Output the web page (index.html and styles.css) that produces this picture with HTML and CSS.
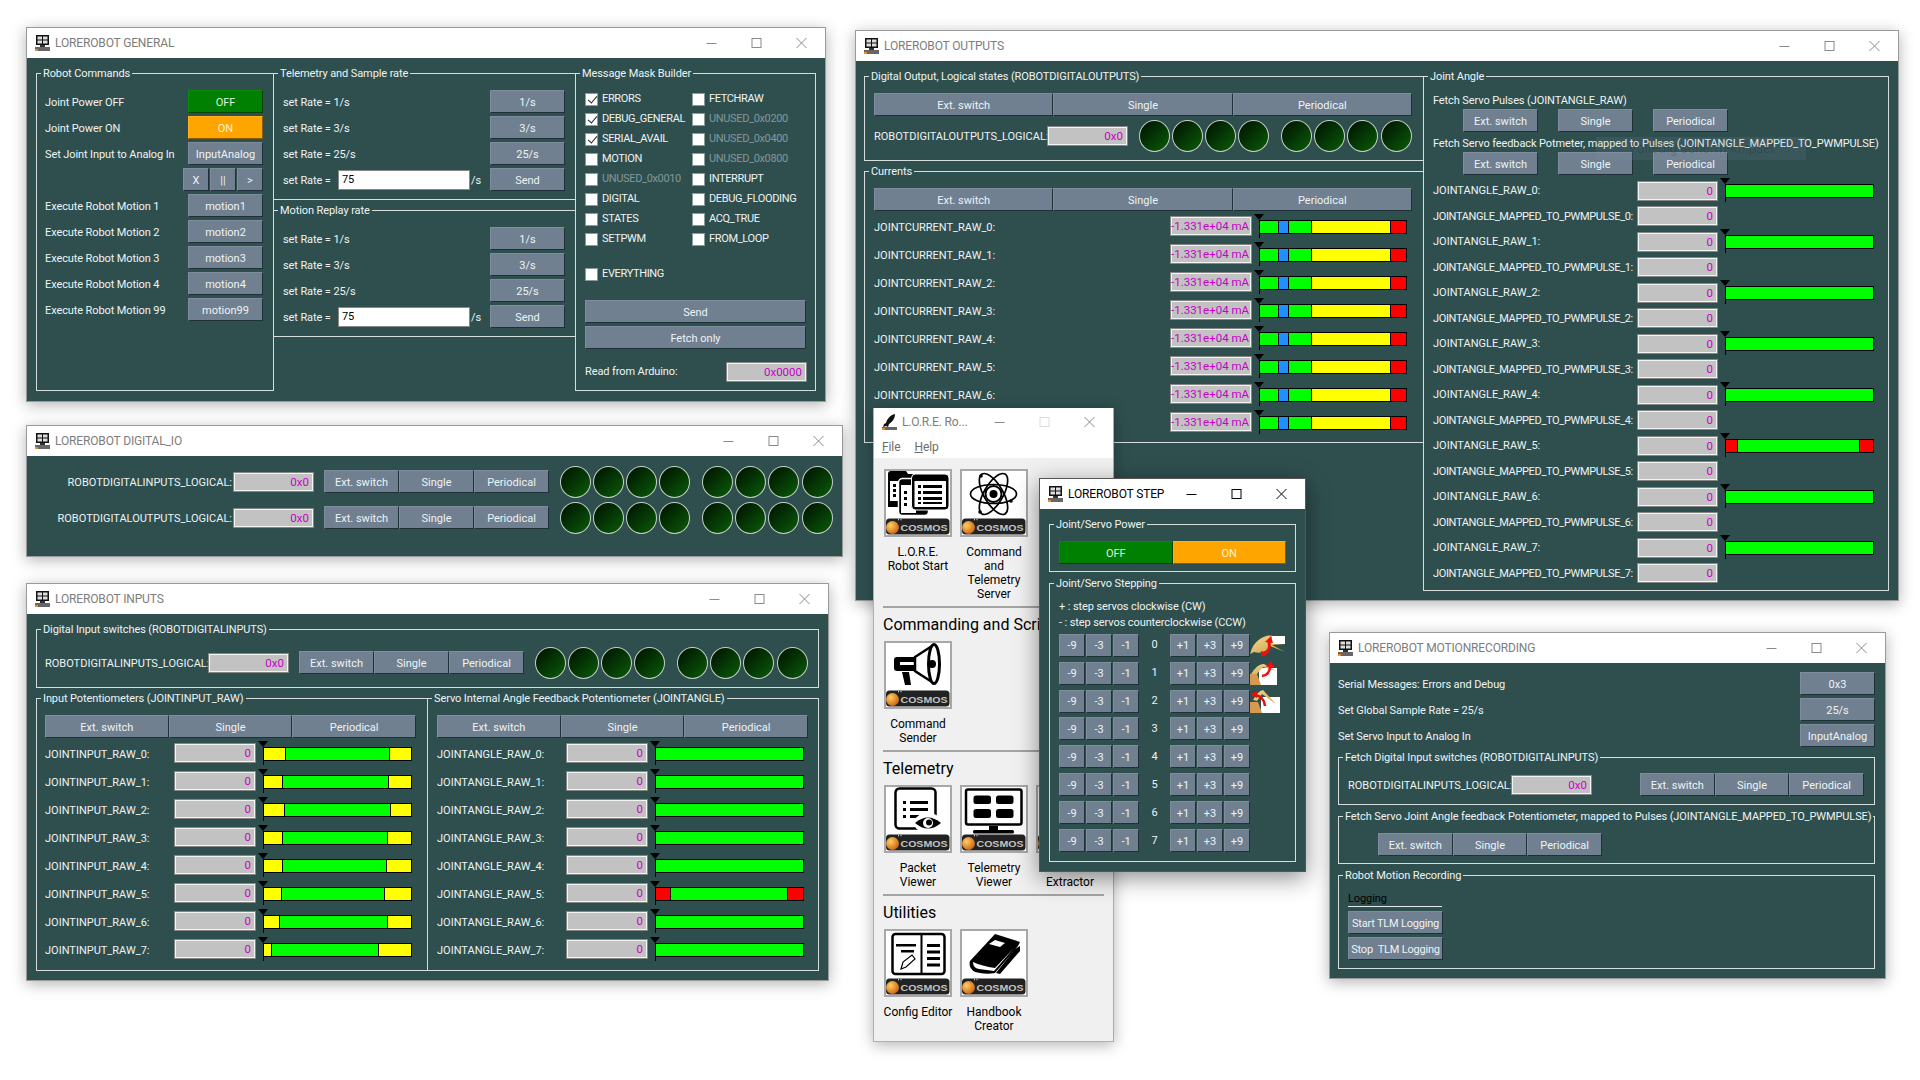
FILE: index.html
```html
<!DOCTYPE html>
<html lang="en">
<head>
<meta charset="utf-8">
<title>LORE Robot COSMOS</title>
<link rel="stylesheet" href="styles.css">
</head>
<body>
<svg class="defs" xmlns="http://www.w3.org/2000/svg">
  <defs>
    <radialGradient id="orb" cx="35%" cy="35%" r="75%"><stop offset="0" stop-color="#ffd060"/><stop offset="1" stop-color="#c85a10"/></radialGradient>
    <linearGradient id="bone" x1="0" y1="0" x2="1" y2="1"><stop offset="0" stop-color="#f3dc98"/><stop offset="1" stop-color="#c89a3c"/></linearGradient>
    <g id="winico">
      <rect x="2" y="0" width="13" height="10" fill="#111"/>
      <rect x="3.500" y="1.500" width="4.500" height="3" fill="#ddd"/><rect x="9" y="1.500" width="4.500" height="3" fill="#ddd"/>
      <rect x="3.500" y="5.500" width="4.500" height="3" fill="#ddd"/><rect x="9" y="5.500" width="4.500" height="3" fill="#ddd"/>
      <rect x="6" y="10" width="5" height="2" fill="#333"/>
      <rect x="1" y="12" width="15" height="4" fill="#666"/>
      <rect x="1" y="14" width="3" height="2" fill="#f08c1e"/>
    </g>
    <g id="rocketico">
      <path d="M14 0 C9 1 6 5 5 9 L3 10 L2 13 L5 12 L7 13 L8 10 C11 8 14 5 14 0Z" fill="#111"/>
      <rect x="1" y="13" width="15" height="3" fill="#666"/>
      <rect x="1" y="14" width="3" height="2" fill="#f08c1e"/>
    </g>
    <g id="badge">
      <rect x="0" y="47.500" width="63.500" height="16" rx="3.500" fill="#222"/>
      <circle cx="6.500" cy="56.500" r="6.500" fill="url(#orb)"/>
      <text x="14.500" y="59.800" class="cosmos" textLength="47" lengthAdjust="spacingAndGlyphs">COSMOS</text>
      <rect x="12" y="47.800" width="1" height="1.500" fill="#ccc"/><rect x="14.500" y="47.800" width="1" height="1.500" fill="#ccc"/>
    </g>
    <g id="i-start">
      <path d="M2 3 a3 3 0 0 1 3-3 h15 l2 3 h26 a3 3 0 0 1 3 3 v30 h-49z" fill="#000"/>
      <rect x="4" y="10" width="10" height="20" fill="#fff"/>
      <rect x="7" y="13" width="3" height="3" fill="#000"/><rect x="7" y="18" width="3" height="3" fill="#000"/><rect x="7" y="23" width="3" height="3" fill="#000"/>
      <rect x="12.500" y="7.500" width="30" height="37" rx="4" fill="#000" stroke="#fff" stroke-width="1.500"/>
      <rect x="15" y="14" width="15" height="28" fill="#fff"/>
      <rect x="18" y="20" width="3" height="3" fill="#000"/><rect x="18" y="26" width="3" height="3" fill="#000"/><rect x="18" y="32" width="3" height="3" fill="#000"/>
      <rect x="25.500" y="3" width="37.500" height="36" rx="4" fill="#000" stroke="#fff" stroke-width="1"/>
      <rect x="28.500" y="10" width="31.500" height="26" fill="#fff"/>
      <rect x="32" y="14" width="3" height="3"/><rect x="37" y="14" width="19" height="3"/>
      <rect x="32" y="20" width="3" height="3"/><rect x="37" y="20" width="19" height="3"/>
      <rect x="32" y="26" width="3" height="3"/><rect x="37" y="26" width="19" height="3"/>
      <rect x="32" y="31" width="3" height="2"/><rect x="37" y="31" width="19" height="2"/>
    </g>
    <g id="i-atom" fill="none" stroke="#000" stroke-width="1.700">
      <ellipse cx="31.500" cy="23" rx="23" ry="9.500"/>
      <ellipse cx="31.500" cy="23" rx="23" ry="9.500" transform="rotate(60 31.500 23)"/>
      <ellipse cx="31.500" cy="23" rx="23" ry="9.500" transform="rotate(-60 31.500 23)"/>
      <circle cx="31.500" cy="23" r="8" fill="#fff" stroke-width="2"/>
      <circle cx="31.500" cy="23" r="4" fill="#000" stroke="none"/>
      <circle cx="19" cy="5" r="1.800" fill="#000" stroke="none"/>
      <circle cx="18" cy="41" r="1.800" fill="#000" stroke="none"/>
      <circle cx="49" cy="30" r="1.800" fill="#000" stroke="none"/>
    </g>
    <g id="i-mega">
      <path d="M8 17 a3 3 0 0 1 3-3 h18 v14 h-18 a3 3 0 0 1-3-3z" fill="#000"/>
      <path d="M14 19 h14 v3 h-14z" fill="#fff"/>
      <path d="M16 29 h7 l2 13 h-6z" fill="#000"/>
      <path d="M29 14 L46 3 v36 L29 28z" fill="#fff" stroke="#000" stroke-width="2.500"/>
      <ellipse cx="48" cy="21" rx="5.500" ry="19.500" fill="#fff" stroke="#000" stroke-width="3"/>
      <circle cx="46" cy="21" r="4" fill="#000"/>
    </g>
    <g id="i-packet">
      <rect x="9.500" y="1.500" width="40" height="40" rx="4" fill="#fff" stroke="#000" stroke-width="2.500"/>
      <rect x="17" y="14" width="3" height="3"/><rect x="24" y="14" width="18" height="3"/>
      <rect x="17" y="21" width="3" height="3"/><rect x="24" y="21" width="18" height="3"/>
      <rect x="17" y="28" width="3" height="3"/><rect x="24" y="28" width="9" height="3"/>
      <ellipse cx="42" cy="36" rx="14" ry="10" fill="#fff"/>
      <path d="M29 36 Q42 25 55 36 Q42 47 29 36Z" fill="#000"/>
      <circle cx="42" cy="36" r="5" fill="#fff"/><circle cx="43" cy="35.500" r="3" fill="#000"/>
    </g>
    <g id="i-tlm">
      <rect x="4" y="2.500" width="55.500" height="35" rx="2" fill="#fff" stroke="#000" stroke-width="2.500"/>
      <rect x="11.500" y="8.500" width="17.500" height="8.500" rx="2.500"/><rect x="34" y="8.500" width="17.500" height="8.500" rx="2.500"/>
      <rect x="11.500" y="22" width="17.500" height="9" rx="2.500"/><rect x="34" y="22" width="17.500" height="9" rx="2.500"/>
      <rect x="27" y="39" width="9" height="4"/><rect x="11" y="43" width="41" height="3.500" rx="1.500"/>
    </g>
    <g id="i-config">
      <rect x="6.500" y="3" width="52" height="40" rx="3" fill="#fff" stroke="#000" stroke-width="2.500"/>
      <rect x="34.500" y="3" width="2" height="40"/>
      <rect x="10" y="13" width="20" height="2.500"/><rect x="15" y="19" width="13" height="2.500"/>
      <rect x="41" y="13" width="13" height="3"/><rect x="41" y="19.500" width="13" height="3"/><rect x="41" y="26" width="13" height="3"/><rect x="41" y="32.500" width="13" height="3"/>
      <path d="M15 38 L17 31 L26 24 L29 28 L20 36Z" fill="#fff" stroke="#000" stroke-width="1.200"/>
    </g>
    <g id="i-book">
      <path d="M8 30 L33 3 L58 11 L56 15 L33 42 Q24 44 13 41 Q6 37 8 30Z" fill="#000"/>
      <path d="M11 31 Q11 37 17 38 L32 40 L52 17 L33 37 Q20 35 11 31Z" fill="#fff"/>
      <path d="M27 13 L33 9 L43 12 L38 16Z" fill="#fff"/>
      <path d="M53 18 L58 15 V20 L38 43 L34 42Z" fill="#000"/>
    </g>
  </defs>
</svg>

<main class="desk">

  <section class="win w-general">
    <header class="title"><svg class="ti" viewBox="0 0 16 16"><use href="#winico"/></svg><span class="tt">LOREROBOT GENERAL</span><div class="ctrls"><svg viewBox="0 0 10 10"><path d="M0 5.500H10"/></svg><svg viewBox="0 0 10 10"><rect x=".5" y=".5" width="9" height="9"/></svg><svg viewBox="0 0 10 10"><path d="M0 0L10 10M10 0L0 10"/></svg></div></header>
    <div class="body gen-body">
      <div class="grp gen-c1">
        <span class="lg">Robot Commands</span>
        <div class="r"><span>Joint Power OFF</span><button class="b wb green">OFF</button></div>
        <div class="r"><span>Joint Power ON</span><button class="b wb orange">ON</button></div>
        <div class="r"><span>Set Joint Input to Analog In</span><button class="b wb">InputAnalog</button></div>
        <div class="r r-end"><button class="b tiny">X</button><button class="b tiny">||</button><button class="b tiny">&gt;</button></div>
        <div class="r"><span>Execute Robot Motion 1</span><button class="b wb">motion1</button></div>
        <div class="r"><span>Execute Robot Motion 2</span><button class="b wb">motion2</button></div>
        <div class="r"><span>Execute Robot Motion 3</span><button class="b wb">motion3</button></div>
        <div class="r"><span>Execute Robot Motion 4</span><button class="b wb">motion4</button></div>
        <div class="r"><span>Execute Robot Motion 99</span><button class="b wb">motion99</button></div>
      </div>
      <div class="gen-c2">
        <div class="grp rate">
          <span class="lg">Telemetry and Sample rate</span>
          <div class="r"><span>set Rate = 1/s</span><button class="b wb">1/s</button></div>
          <div class="r"><span>set Rate = 3/s</span><button class="b wb">3/s</button></div>
          <div class="r"><span>set Rate = 25/s</span><button class="b wb">25/s</button></div>
          <div class="r"><span class="rl">set Rate =</span><span class="inp">75</span><span class="rs">/s</span><button class="b wb">Send</button></div>
        </div>
        <div class="grp rate">
          <span class="lg">Motion Replay rate</span>
          <div class="r"><span>set Rate = 1/s</span><button class="b wb">1/s</button></div>
          <div class="r"><span>set Rate = 3/s</span><button class="b wb">3/s</button></div>
          <div class="r"><span>set Rate = 25/s</span><button class="b wb">25/s</button></div>
          <div class="r"><span class="rl">set Rate =</span><span class="inp">75</span><span class="rs">/s</span><button class="b wb">Send</button></div>
        </div>
      </div>
      <div class="grp gen-c3">
        <span class="lg">Message Mask Builder</span>
        <div class="mask">
          <label class="ck"><i class="cb on"></i>ERRORS</label><label class="ck"><i class="cb"></i>FETCHRAW</label>
          <label class="ck"><i class="cb on"></i>DEBUG_GENERAL</label><label class="ck off"><i class="cb"></i>UNUSED_0x0200</label>
          <label class="ck"><i class="cb on"></i>SERIAL_AVAIL</label><label class="ck off"><i class="cb"></i>UNUSED_0x0400</label>
          <label class="ck"><i class="cb"></i>MOTION</label><label class="ck off"><i class="cb"></i>UNUSED_0x0800</label>
          <label class="ck off"><i class="cb"></i>UNUSED_0x0010</label><label class="ck"><i class="cb"></i>INTERRUPT</label>
          <label class="ck"><i class="cb"></i>DIGITAL</label><label class="ck"><i class="cb"></i>DEBUG_FLOODING</label>
          <label class="ck"><i class="cb"></i>STATES</label><label class="ck"><i class="cb"></i>ACQ_TRUE</label>
          <label class="ck"><i class="cb"></i>SETPWM</label><label class="ck"><i class="cb"></i>FROM_LOOP</label>
        </div>
        <label class="ck every"><i class="cb"></i>EVERYTHING</label>
        <button class="b fw">Send</button>
        <button class="b fw">Fetch only</button>
        <div class="read"><span>Read from Arduino:</span><span class="v">0x0000</span></div>
      </div>
    </div>
  </section>

  <section class="win w-dio">
    <header class="title"><svg class="ti" viewBox="0 0 16 16"><use href="#winico"/></svg><span class="tt">LOREROBOT DIGITAL_IO</span><div class="ctrls"><svg viewBox="0 0 10 10"><path d="M0 5.500H10"/></svg><svg viewBox="0 0 10 10"><rect x=".5" y=".5" width="9" height="9"/></svg><svg viewBox="0 0 10 10"><path d="M0 0L10 10M10 0L0 10"/></svg></div></header>
    <div class="body dio-body">
      <div class="io"><span class="iol">ROBOTDIGITALINPUTS_LOGICAL:</span><span class="v">0x0</span><div class="seg"><button class="b">Ext. switch</button><button class="b">Single</button><button class="b">Periodical</button></div><div class="leds"><div><i></i><i></i><i></i><i></i></div><div><i></i><i></i><i></i><i></i></div></div></div>
      <div class="io"><span class="iol">ROBOTDIGITALOUTPUTS_LOGICAL:</span><span class="v">0x0</span><div class="seg"><button class="b">Ext. switch</button><button class="b">Single</button><button class="b">Periodical</button></div><div class="leds"><div><i></i><i></i><i></i><i></i></div><div><i></i><i></i><i></i><i></i></div></div></div>
    </div>
  </section>

  <section class="win w-inputs">
    <header class="title"><svg class="ti" viewBox="0 0 16 16"><use href="#winico"/></svg><span class="tt">LOREROBOT INPUTS</span><div class="ctrls"><svg viewBox="0 0 10 10"><path d="M0 5.500H10"/></svg><svg viewBox="0 0 10 10"><rect x=".5" y=".5" width="9" height="9"/></svg><svg viewBox="0 0 10 10"><path d="M0 0L10 10M10 0L0 10"/></svg></div></header>
    <div class="body in-body">
      <div class="grp in-dig">
        <span class="lg">Digital Input switches (ROBOTDIGITALINPUTS)</span>
        <div class="io"><span class="iol">ROBOTDIGITALINPUTS_LOGICAL:</span><span class="v">0x0</span><div class="seg"><button class="b">Ext. switch</button><button class="b">Single</button><button class="b">Periodical</button></div><div class="leds"><div><i></i><i></i><i></i><i></i></div><div><i></i><i></i><i></i><i></i></div></div></div>
      </div>
      <div class="in-pots">
        <div class="grp pot">
          <span class="lg">Input Potentiometers (JOINTINPUT_RAW)</span>
          <div class="seg seg3"><button class="b">Ext. switch</button><button class="b">Single</button><button class="b">Periodical</button></div>
          <div class="m"><span>JOINTINPUT_RAW_0:</span><span class="v">0</span><div class="bar"><i class="y" style="width:15.1%"></i><i class="g" style="width:70.5%"></i><i class="y fl"></i></div></div>
          <div class="m"><span>JOINTINPUT_RAW_1:</span><span class="v">0</span><div class="bar"><i class="y" style="width:12.9%"></i><i class="g" style="width:72%"></i><i class="y fl"></i></div></div>
          <div class="m"><span>JOINTINPUT_RAW_2:</span><span class="v">0</span><div class="bar"><i class="y" style="width:14.4%"></i><i class="g" style="width:72.3%"></i><i class="y fl"></i></div></div>
          <div class="m"><span>JOINTINPUT_RAW_3:</span><span class="v">0</span><div class="bar"><i class="y" style="width:12.9%"></i><i class="g" style="width:71.3%"></i><i class="y fl"></i></div></div>
          <div class="m"><span>JOINTINPUT_RAW_4:</span><span class="v">0</span><div class="bar"><i class="y" style="width:12.9%"></i><i class="g" style="width:70.6%"></i><i class="y fl"></i></div></div>
          <div class="m"><span>JOINTINPUT_RAW_5:</span><span class="v">0</span><div class="bar"><i class="y" style="width:12.2%"></i><i class="g" style="width:69.8%"></i><i class="y fl"></i></div></div>
          <div class="m"><span>JOINTINPUT_RAW_6:</span><span class="v">0</span><div class="bar"><i class="y" style="width:10.8%"></i><i class="g" style="width:73.4%"></i><i class="y fl"></i></div></div>
          <div class="m"><span>JOINTINPUT_RAW_7:</span><span class="v">0</span><div class="bar"><i class="y" style="width:5.4%"></i><i class="g" style="width:72.7%"></i><i class="y fl"></i></div></div>
        </div>
        <div class="grp pot pot2">
          <span class="lg">Servo Internal Angle Feedback Potentiometer (JOINTANGLE)</span>
          <div class="seg seg3"><button class="b">Ext. switch</button><button class="b">Single</button><button class="b">Periodical</button></div>
          <div class="m"><span>JOINTANGLE_RAW_0:</span><span class="v">0</span><div class="bar"><i class="g fl"></i></div></div>
          <div class="m"><span>JOINTANGLE_RAW_1:</span><span class="v">0</span><div class="bar"><i class="g fl"></i></div></div>
          <div class="m"><span>JOINTANGLE_RAW_2:</span><span class="v">0</span><div class="bar"><i class="g fl"></i></div></div>
          <div class="m"><span>JOINTANGLE_RAW_3:</span><span class="v">0</span><div class="bar"><i class="g fl"></i></div></div>
          <div class="m"><span>JOINTANGLE_RAW_4:</span><span class="v">0</span><div class="bar"><i class="g fl"></i></div></div>
          <div class="m"><span>JOINTANGLE_RAW_5:</span><span class="v">0</span><div class="bar"><i class="r" style="width:10%"></i><i class="g" style="width:80%"></i><i class="r fl"></i></div></div>
          <div class="m"><span>JOINTANGLE_RAW_6:</span><span class="v">0</span><div class="bar"><i class="g fl"></i></div></div>
          <div class="m"><span>JOINTANGLE_RAW_7:</span><span class="v">0</span><div class="bar"><i class="g fl"></i></div></div>
        </div>
      </div>
    </div>
  </section>

  <section class="win w-out">
    <header class="title"><svg class="ti" viewBox="0 0 16 16"><use href="#winico"/></svg><span class="tt">LOREROBOT OUTPUTS</span><div class="ctrls"><svg viewBox="0 0 10 10"><path d="M0 5.500H10"/></svg><svg viewBox="0 0 10 10"><rect x=".5" y=".5" width="9" height="9"/></svg><svg viewBox="0 0 10 10"><path d="M0 0L10 10M10 0L0 10"/></svg></div></header>
    <div class="body out-body">
      <div class="out-l">
        <div class="grp out-dig">
          <span class="lg">Digital Output, Logical states (ROBOTDIGITALOUTPUTS)</span>
          <div class="seg seg3"><button class="b">Ext. switch</button><button class="b">Single</button><button class="b">Periodical</button></div>
          <div class="io out-io"><span class="iol">ROBOTDIGITALOUTPUTS_LOGICAL:</span><span class="v">0x0</span><div class="leds"><div><i></i><i></i><i></i><i></i></div><div><i></i><i></i><i></i><i></i></div></div></div>
        </div>
        <div class="grp out-cur">
          <span class="lg">Currents</span>
          <div class="seg seg3"><button class="b">Ext. switch</button><button class="b">Single</button><button class="b">Periodical</button></div>
          <div class="m cur"><span>JOINTCURRENT_RAW_0:</span><span class="v">-1.331e+04 mA</span><div class="bar"><i class="g" style="width:12.7%"></i><i class="bl" style="width:7%"></i><i class="g" style="width:16.2%"></i><i class="y" style="width:53.6%"></i><i class="r fl"></i></div></div>
          <div class="m cur"><span>JOINTCURRENT_RAW_1:</span><span class="v">-1.331e+04 mA</span><div class="bar"><i class="g" style="width:12.7%"></i><i class="bl" style="width:7%"></i><i class="g" style="width:16.2%"></i><i class="y" style="width:53.6%"></i><i class="r fl"></i></div></div>
          <div class="m cur"><span>JOINTCURRENT_RAW_2:</span><span class="v">-1.331e+04 mA</span><div class="bar"><i class="g" style="width:12.7%"></i><i class="bl" style="width:7%"></i><i class="g" style="width:16.2%"></i><i class="y" style="width:53.6%"></i><i class="r fl"></i></div></div>
          <div class="m cur"><span>JOINTCURRENT_RAW_3:</span><span class="v">-1.331e+04 mA</span><div class="bar"><i class="g" style="width:12.7%"></i><i class="bl" style="width:7%"></i><i class="g" style="width:16.2%"></i><i class="y" style="width:53.6%"></i><i class="r fl"></i></div></div>
          <div class="m cur"><span>JOINTCURRENT_RAW_4:</span><span class="v">-1.331e+04 mA</span><div class="bar"><i class="g" style="width:12.7%"></i><i class="bl" style="width:7%"></i><i class="g" style="width:16.2%"></i><i class="y" style="width:53.6%"></i><i class="r fl"></i></div></div>
          <div class="m cur"><span>JOINTCURRENT_RAW_5:</span><span class="v">-1.331e+04 mA</span><div class="bar"><i class="g" style="width:12.7%"></i><i class="bl" style="width:7%"></i><i class="g" style="width:16.2%"></i><i class="y" style="width:53.6%"></i><i class="r fl"></i></div></div>
          <div class="m cur"><span>JOINTCURRENT_RAW_6:</span><span class="v">-1.331e+04 mA</span><div class="bar"><i class="g" style="width:12.7%"></i><i class="bl" style="width:7%"></i><i class="g" style="width:16.2%"></i><i class="y" style="width:53.6%"></i><i class="r fl"></i></div></div>
          <div class="m cur"><span>JOINTCURRENT_RAW_7:</span><span class="v">-1.331e+04 mA</span><div class="bar"><i class="g" style="width:12.7%"></i><i class="bl" style="width:7%"></i><i class="g" style="width:16.2%"></i><i class="y" style="width:53.6%"></i><i class="r fl"></i></div></div>
        </div>
      </div>
      <div class="grp out-r">
        <span class="lg">Joint Angle</span>
        <div class="fetch">Fetch Servo Pulses (JOINTANGLE_RAW)</div>
        <div class="tri"><button class="b">Ext. switch</button><button class="b">Single</button><button class="b">Periodical</button></div>
        <div class="fetch f2">Fetch Servo feedback Potmeter, mapped to Pulses (JOINTANGLE_MAPPED_TO_PWMPULSE)</div>
        <div class="tri"><button class="b">Ext. switch</button><button class="b">Single</button><button class="b">Periodical</button></div>
        <div class="jrows">
          <div class="m ja"><span>JOINTANGLE_RAW_0:</span><span class="v">0</span><div class="bar"><i class="g fl"></i></div></div>
          <div class="m ja"><span>JOINTANGLE_MAPPED_TO_PWMPULSE_0:</span><span class="v">0</span></div>
          <div class="m ja"><span>JOINTANGLE_RAW_1:</span><span class="v">0</span><div class="bar"><i class="g fl"></i></div></div>
          <div class="m ja"><span>JOINTANGLE_MAPPED_TO_PWMPULSE_1:</span><span class="v">0</span></div>
          <div class="m ja"><span>JOINTANGLE_RAW_2:</span><span class="v">0</span><div class="bar"><i class="g fl"></i></div></div>
          <div class="m ja"><span>JOINTANGLE_MAPPED_TO_PWMPULSE_2:</span><span class="v">0</span></div>
          <div class="m ja"><span>JOINTANGLE_RAW_3:</span><span class="v">0</span><div class="bar"><i class="g fl"></i></div></div>
          <div class="m ja"><span>JOINTANGLE_MAPPED_TO_PWMPULSE_3:</span><span class="v">0</span></div>
          <div class="m ja"><span>JOINTANGLE_RAW_4:</span><span class="v">0</span><div class="bar"><i class="g fl"></i></div></div>
          <div class="m ja"><span>JOINTANGLE_MAPPED_TO_PWMPULSE_4:</span><span class="v">0</span></div>
          <div class="m ja"><span>JOINTANGLE_RAW_5:</span><span class="v">0</span><div class="bar"><i class="r" style="width:8%"></i><i class="g" style="width:83%"></i><i class="r fl"></i></div></div>
          <div class="m ja"><span>JOINTANGLE_MAPPED_TO_PWMPULSE_5:</span><span class="v">0</span></div>
          <div class="m ja"><span>JOINTANGLE_RAW_6:</span><span class="v">0</span><div class="bar"><i class="g fl"></i></div></div>
          <div class="m ja"><span>JOINTANGLE_MAPPED_TO_PWMPULSE_6:</span><span class="v">0</span></div>
          <div class="m ja"><span>JOINTANGLE_RAW_7:</span><span class="v">0</span><div class="bar"><i class="g fl"></i></div></div>
          <div class="m ja"><span>JOINTANGLE_MAPPED_TO_PWMPULSE_7:</span><span class="v">0</span></div>
        </div>
      </div>
    </div>
    <div class="snip">Volledig scherm-knipsel</div>
  </section>

  <section class="win w-lore">
    <header class="title lore-title"><svg class="ti" viewBox="0 0 16 16"><use href="#rocketico"/></svg><span class="tt">L.O.R.E. Ro...</span><div class="ctrls"><svg viewBox="0 0 10 10"><path d="M0 5.500H10"/></svg><svg class="dis" viewBox="0 0 10 10"><rect x=".5" y=".5" width="9" height="9"/></svg><svg viewBox="0 0 10 10"><path d="M0 0L10 10M10 0L0 10"/></svg></div></header>
    <nav class="menu"><span><u>F</u>ile</span><span><u>H</u>elp</span></nav>
    <div class="lore-body">
      <div class="sec sec-first">
        <div class="tools">
          <div class="tool"><svg class="ico" viewBox="0 0 64 64"><use href="#i-start"/><use href="#badge"/></svg><span>L.O.R.E.<br>Robot Start</span></div>
          <div class="tool"><svg class="ico" viewBox="0 0 64 64"><use href="#i-atom"/><use href="#badge"/></svg><span>Command<br>and<br>Telemetry<br>Server</span></div>
        </div>
      </div>
      <div class="sec">
        <h2>Commanding and Scripting</h2>
        <div class="tools">
          <div class="tool"><svg class="ico" viewBox="0 0 64 64"><use href="#i-mega"/><use href="#badge"/></svg><span>Command<br>Sender</span></div>
        </div>
      </div>
      <div class="sec">
        <h2>Telemetry</h2>
        <div class="tools">
          <div class="tool"><svg class="ico" viewBox="0 0 64 64"><use href="#i-packet"/><use href="#badge"/></svg><span>Packet<br>Viewer</span></div>
          <div class="tool"><svg class="ico" viewBox="0 0 64 64"><use href="#i-tlm"/><use href="#badge"/></svg><span>Telemetry<br>Viewer</span></div>
          <div class="tool"><svg class="ico" viewBox="0 0 64 64"><use href="#badge"/></svg><span>Data<br>Extractor</span></div>
        </div>
      </div>
      <div class="sec sec-last">
        <h2>Utilities</h2>
        <div class="tools">
          <div class="tool"><svg class="ico" viewBox="0 0 64 64"><use href="#i-config"/><use href="#badge"/></svg><span>Config Editor</span></div>
          <div class="tool"><svg class="ico" viewBox="0 0 64 64"><use href="#i-book"/><use href="#badge"/></svg><span>Handbook<br>Creator</span></div>
        </div>
      </div>
    </div>
  </section>

  <section class="win w-step">
    <header class="title active"><svg class="ti" viewBox="0 0 16 16"><use href="#winico"/></svg><span class="tt">LOREROBOT STEP</span><div class="ctrls"><svg viewBox="0 0 10 10"><path d="M0 5.500H10"/></svg><svg viewBox="0 0 10 10"><rect x=".5" y=".5" width="9" height="9"/></svg><svg viewBox="0 0 10 10"><path d="M0 0L10 10M10 0L0 10"/></svg></div></header>
    <div class="body step-body">
      <div class="grp st-pow">
        <span class="lg">Joint/Servo Power</span>
        <div class="seg seg3"><button class="b green">OFF</button><button class="b orange">ON</button></div>
      </div>
      <div class="grp st-step">
        <span class="lg">Joint/Servo Stepping</span>
        <p>+ : step servos clockwise (CW)</p>
        <p>- : step servos counterclockwise (CCW)</p>
        <div class="st"><button class="b">-9</button><button class="b">-3</button><button class="b">-1</button><span>0</span><button class="b">+1</button><button class="b">+3</button><button class="b">+9</button>
          <svg class="joint" viewBox="0 0 35 24"><path d="M0 21 Q3 10 10 6 Q17 1 23 3 L35 3 V11 L22 12 L35 19 L20 13 Q14 22 4 19Z" fill="url(#bone)"/><rect x="22" y="3" width="13" height="8" fill="#fff"/><path d="M19 9 A12 12 0 0 1 14 22" fill="none" stroke="#f01010" stroke-width="3"/><path d="M15 9 L21 3 L23 10Z" fill="#f01010"/><path d="M18 20 L11 24 L11 18Z" fill="#f01010"/></svg></div>
        <div class="st"><button class="b">-9</button><button class="b">-3</button><button class="b">-1</button><span>1</span><button class="b">+1</button><button class="b">+3</button><button class="b">+9</button>
          <svg class="joint" viewBox="0 0 35 24"><rect x="9" y="7" width="18" height="17" fill="#fff"/><path d="M0 13 L7 13 L11 24 L0 24Z" fill="#d49a50"/><path d="M1 13 Q8 2 14 3 L26 10 L13 6 L7 13Z" fill="url(#bone)"/><path d="M12 15 Q20 14 20 5" fill="none" stroke="#f01010" stroke-width="2.500"/><path d="M16 6 L21 0 L24 6Z" fill="#f01010"/></svg></div>
        <div class="st"><button class="b">-9</button><button class="b">-3</button><button class="b">-1</button><span>2</span><button class="b">+1</button><button class="b">+3</button><button class="b">+9</button>
          <svg class="joint" viewBox="0 0 35 24"><rect x="11" y="8" width="19" height="16" fill="#fff"/><path d="M0 13 L8 13 L12 24 L0 24Z" fill="#d49a50"/><path d="M3 11 Q9 1 13 1 L26 15 L12 5 L7 12Z" fill="url(#bone)"/><path d="M5 6 Q14 7 15 17" fill="none" stroke="#e01010" stroke-width="2.500"/><path d="M0 5 L7 2 L7 9Z" fill="#e01010"/></svg></div>
        <div class="st"><button class="b">-9</button><button class="b">-3</button><button class="b">-1</button><span>3</span><button class="b">+1</button><button class="b">+3</button><button class="b">+9</button></div>
        <div class="st"><button class="b">-9</button><button class="b">-3</button><button class="b">-1</button><span>4</span><button class="b">+1</button><button class="b">+3</button><button class="b">+9</button></div>
        <div class="st"><button class="b">-9</button><button class="b">-3</button><button class="b">-1</button><span>5</span><button class="b">+1</button><button class="b">+3</button><button class="b">+9</button></div>
        <div class="st"><button class="b">-9</button><button class="b">-3</button><button class="b">-1</button><span>6</span><button class="b">+1</button><button class="b">+3</button><button class="b">+9</button></div>
        <div class="st"><button class="b">-9</button><button class="b">-3</button><button class="b">-1</button><span>7</span><button class="b">+1</button><button class="b">+3</button><button class="b">+9</button></div>
      </div>
    </div>
  </section>

  <section class="win w-mot">
    <header class="title"><svg class="ti" viewBox="0 0 16 16"><use href="#winico"/></svg><span class="tt">LOREROBOT MOTIONRECORDING</span><div class="ctrls"><svg viewBox="0 0 10 10"><path d="M0 5.500H10"/></svg><svg viewBox="0 0 10 10"><rect x=".5" y=".5" width="9" height="9"/></svg><svg viewBox="0 0 10 10"><path d="M0 0L10 10M10 0L0 10"/></svg></div></header>
    <div class="body mot-body">
      <div class="r"><span>Serial Messages: Errors and Debug</span><button class="b wb">0x3</button></div>
      <div class="r"><span>Set Global Sample Rate = 25/s</span><button class="b wb">25/s</button></div>
      <div class="r"><span>Set Servo Input to Analog In</span><button class="b wb">InputAnalog</button></div>
      <div class="grp mot-1">
        <span class="lg">Fetch Digital Input switches (ROBOTDIGITALINPUTS)</span>
        <div class="io"><span class="iol">ROBOTDIGITALINPUTS_LOGICAL:</span><span class="v">0x0</span><div class="seg"><button class="b">Ext. switch</button><button class="b">Single</button><button class="b">Periodical</button></div></div>
      </div>
      <div class="grp mot-2">
        <span class="lg">Fetch Servo Joint Angle feedback Potentiometer, mapped to Pulses (JOINTANGLE_MAPPED_TO_PWMPULSE)</span>
        <div class="seg"><button class="b">Ext. switch</button><button class="b">Single</button><button class="b">Periodical</button></div>
      </div>
      <div class="grp mot-3">
        <span class="lg">Robot Motion Recording</span>
        <div class="logging">Logging</div>
        <button class="b logb">Start TLM Logging</button>
        <button class="b logb">Stop  TLM Logging</button>
      </div>
    </div>
  </section>

</main>
</body>
</html>
```
FILE: styles.css
```css
* { box-sizing: border-box; }
html, body { margin: 0; padding: 0; background: #fff; }
body { font: 11px/16px Roboto, "Liberation Sans", sans-serif; letter-spacing: -.100px; color: #eef3f3; }
.defs { position: absolute; width: 0; height: 0; }
.cosmos { font: bold 9px "Liberation Sans", sans-serif; fill: #c4c4c4; letter-spacing: 0; }

.desk { position: relative; width: 1920px; height: 1080px; overflow: hidden; background: #fff; }

/* windows on the desktop */
.win { position: absolute; display: flex; flex-direction: column; background: #2f4f4f; border: 1px solid #9a9a9a; box-shadow: 0 3px 14px rgba(0,0,0,.3); }
.w-general { left: 26px; top: 27px; width: 800px; height: 375px; }
.w-dio { left: 26px; top: 425px; width: 817px; height: 132px; }
.w-inputs { left: 26px; top: 583px; width: 803px; height: 398px; }
.w-out { left: 855px; top: 30px; width: 1044px; height: 571px; }
.w-lore { left: 873px; top: 408px; width: 241px; height: 634px; background: #f0f0f0; border-color: #b0b0b0; border-top: 0; border-right: 1px solid #aaa; }
.w-step { left: 1039px; top: 478px; width: 267px; height: 394px; border-color: #555; box-shadow: 0 6px 22px rgba(0,0,0,.45); }
.w-mot { left: 1329px; top: 632px; width: 557px; height: 347px; }

.title { flex: none; display: flex; align-items: center; height: 30px; padding-left: 7px; background: #fff; color: #7d7d7d; font-size: 12px; letter-spacing: -.150px; }
.title.active { color: #000; }
.lore-title { height: 28px; }
.ti { flex: none; width: 16px; height: 16px; margin-right: 5px; }
.tt { white-space: nowrap; }
.ctrls { display: flex; margin-left: auto; margin-right: 1px; flex: none; }
.ctrls svg { box-sizing: content-box; width: 10px; height: 10px; padding: 0 17.500px; fill: none; stroke: #8a8a8a; stroke-width: 1; overflow: visible; }
.active .ctrls svg { stroke: #000; }
.ctrls svg.dis { stroke: #dcdcdc; }

.body { flex: 1; min-height: 0; }

/* group box */
.grp { position: relative; border: 1px solid #d6dddd; }
.lg { position: absolute; top: -7px; left: 4px; padding: 0 2px; background: #2f4f4f; white-space: nowrap; line-height: 14px; }

/* buttons */
.b { display: block; height: 23px; margin: 0; padding: 2px 0 0; font: inherit; letter-spacing: 0; color: #eef3f5; background: #708090; border: 1px solid; border-color: #7e8d9c #1f3138 #1f3138 #7e8d9c; white-space: pre; }
.b.green { background: #008000; border-color: #0a8a0a #024002 #024002 #0a8a0a; color: #dff5df; }
.b.orange { background: #ffa500; border-color: #ffb020 #8a5a00 #8a5a00 #ffb020; color: #fff4d8; }
.wb { width: 75px; flex: none; }
.tiny { width: 26px; flex: none; }

/* plain rows */
.r { display: flex; align-items: center; justify-content: space-between; height: 23px; margin-bottom: 3px; white-space: nowrap; }
.r > span:not(.inp) { padding-top: 2px; }
.r-end { justify-content: flex-end; gap: 1px; }

/* value read-outs */
.v { display: block; flex: none; width: 81px; height: 20px; padding-right: 4px; text-align: right; font-size: 11.500px; letter-spacing: 0; line-height: 18px; color: #c800c8; background: #c2c2c2; border: 1px solid #858585; box-shadow: inset 0 0 0 1px #f4f4f4; white-space: nowrap; }

/* caps labels */
.iol, .m > span:first-child { letter-spacing: 0; }
.iol { padding-top: 2px; }
.m > span:first-child { padding-top: 3px; }
.ck { letter-spacing: -.350px; }

/* General */
.gen-body { display: flex; padding: 15px 0 10px 9px; }
.gen-c1 { width: 238px; padding: 16px 10px 0 8px; }
.gen-c2 { width: 303px; margin-left: -1px; display: flex; flex-direction: column; gap: 10px; }
.rate { padding: 16px 10px 5px 9px; }
.rl { width: 55px; flex: none; }
.inp { flex: none; display: block; width: 132px; height: 20px; padding-left: 3px; line-height: 18px; background: #fff; color: #000; border: 1px solid #888; }
.rs { flex: none; margin-left: 1px; margin-right: auto; }
.gen-c3 { width: 241px; margin-left: -1px; padding: 15px 0 0 9px; }
.mask { display: grid; grid-template-columns: 107px auto; grid-auto-rows: 20px; }
.ck { display: flex; align-items: center; gap: 4px; white-space: nowrap; }
.ck.off { color: #83979a; }
.cb { position: relative; flex: none; display: block; width: 13px; height: 13px; background: #fff; border: 1px solid #8b9a9a; }
.cb.on::after { content: ""; position: absolute; left: 3.500px; top: 0; width: 4px; height: 8px; border: solid #222; border-width: 0 1.500px 1.500px 0; transform: rotate(40deg); }
.every { height: 20px; margin-top: 15px; }
.fw { width: 221px; margin-bottom: 3px; }
.gen-c3 .fw:first-of-type { margin-top: 16px; }
.read { display: flex; align-items: center; justify-content: space-between; width: 222px; height: 20px; margin-top: 13px; }

/* digital rows */
.io { display: flex; align-items: center; height: 23px; }
.iol { flex: none; text-align: right; white-space: nowrap; }
.seg { display: flex; flex: none; }
.seg .b { flex: 1; }
.io .seg { width: 225px; margin-left: 10px; }
.leds { display: flex; gap: 12px; flex: none; margin-left: 11px; }
.leds div { display: flex; gap: 2.100px; }
.leds i { display: block; width: 31px; height: 32px; border-radius: 50%; border: 1px solid #c4d0c4; background: linear-gradient(135deg, #001000, #0a5c0a); }

.dio-body { padding: 14px 0 0; }
.dio-body .io { margin-bottom: 13px; }
.dio-body .iol { width: 205px; margin-right: 1px; }

/* Inputs */
.in-body { display: flex; flex-direction: column; padding: 15px 0 0 9px; }
.in-dig { width: 783px; height: 59px; padding: 21px 0 0 8px; }
.in-dig .iol { width: 162px; margin-right: 1px; }
.in-pots { display: flex; margin-top: 10px; }
.pot { width: 392px; height: 273px; padding: 16px 0 0 8px; }
.pot2 { margin-left: -1px; padding-left: 9px; }
.seg3 { width: 371px; margin-bottom: 1px; }

/* meters */
.m { display: grid; grid-template-columns: 129px 82px 156px; align-items: center; height: 28px; white-space: nowrap; }
.m .v { width: 100%; }
.bar { position: relative; display: flex; width: 149px; height: 14px; margin: 1px 0 0 7px; border: 1px solid #000; background: #0f0; }
.bar::before { content: ""; position: absolute; left: -6px; top: -7px; border: solid transparent; border-width: 6px 5.500px 0; border-top-color: #000; }
.bar::after { content: ""; position: absolute; left: -1px; top: -1px; width: 1px; height: 18px; background: #000; }
.bar i { display: block; height: 100%; border-right: 1px solid #000; }
.bar i.fl { flex: 1; border-right: 0; }
.bar .g { background: #0f0; }
.bar .y { background: #ff0; }
.bar .r { background: #f00; }
.bar .bl { background: #1e90ff; }

/* Outputs */
.out-body { display: flex; align-items: flex-start; padding: 15px 0 0 8px; }
.out-l { width: 560px; flex: none; }
.out-dig { height: 85px; padding: 16px 0 0 9px; }
.out-dig .seg3, .out-cur .seg3 { width: 538px; }
.out-io { margin-top: 8px; }
.out-io .iol { width: 173px; text-align: left; }
.out-io .leds { margin-left: 11px; }
.out-cur { height: 272px; margin-top: 10px; padding: 16px 0 0 9px; }
.cur { grid-template-columns: 296px 82px 155px; }
.cur .v { padding: 0 3px 0 0; }
.cur .bar { width: 148px; }
.out-r { flex: none; width: 466px; height: 515px; margin-left: -1px; padding: 15px 0 0 9px; }
.fetch { height: 16px; padding-top: 1px; white-space: nowrap; }
.f2 { margin-top: 3px; }
.tri { display: flex; gap: 20px; margin: 1px 0 0 30px; }
.tri .b { width: 75px; }
.jrows { margin-top: 3px; }
.ja { height: 25.500px; grid-template-columns: 204px 81px 156px; }
.jrows .m > span:first-child { padding-top: 1px; }
.jrows .m:nth-child(even) > span:first-child { letter-spacing: -.350px; }
.snip { position: absolute; left: 740px; top: 106px; width: 210px; height: 23px; text-align: center; font-size: 14px; line-height: 23px; color: rgba(0,0,0,.16); background: rgba(130,150,170,.14); pointer-events: none; }

/* L.O.R.E. launcher */
.menu { flex: none; display: flex; gap: 14px; height: 22px; padding: 3px 0 0 8px; background: #fff; color: #6d6d6d; font-size: 12px; }
.lore-body { flex: 1; padding: 0 9px; color: #000; overflow: hidden; font-size: 12px; letter-spacing: 0; }
.sec { border-bottom: 2px solid #a4a4a4; padding-bottom: 5px; }
.sec-first { padding: 11px 0 5px; }
.sec-last { border-bottom: 0; }
.sec h2 { margin: 7px 0 6px; font-size: 16px; line-height: 20px; font-weight: 400; white-space: nowrap; }
.tools { display: flex; gap: 8px; margin-left: 1px; }
.tool { width: 68px; display: flex; flex-direction: column; align-items: center; }
.ico { flex: none; width: 68px; height: 68px; background: #fff; border: 2px solid #a8a8a8; }
.tool span { display: block; width: 76px; margin-top: 8px; text-align: center; line-height: 14px; white-space: nowrap; }

/* Step */
.step-body { padding: 15px 0 0 9px; }
.st-pow { width: 247px; height: 48px; padding: 16px 0 0 9px; }
.st-pow .seg3 { width: 227px; }
.st-step { width: 247px; height: 279px; margin-top: 11px; padding: 15px 0 0 9px; }
.st-step p { margin: 0; white-space: nowrap; }
.st { display: grid; grid-template-columns: repeat(3, 26px) 29px repeat(3, 26px) 35px; column-gap: 1px; align-items: center; height: 23px; margin-bottom: 5px; }
.st-step p + .st { margin-top: 2px; }
.st span { text-align: center; }
.joint { width: 35px; height: 24px; margin-left: -1px; }

/* Motion */
.mot-body { padding: 9px 10px 0 8px; }
.mot-1 { height: 48px; margin-top: 10px; padding: 15px 10px 0 9px; }
.mot-1 .iol { width: 163px; text-align: left; }
.mot-1 .seg { width: 224px; margin-left: auto; }
.mot-2 { height: 48px; margin-top: 11px; padding: 16px 0 0 39px; }
.mot-2 .seg { width: 224px; }
.mot-3 { height: 94px; margin-top: 11px; padding: 15px 0 0 9px; }
.logging { width: 94px; height: 16px; line-height: 15px; color: #000; border-bottom: 1px solid #e4e8e8; margin-bottom: 4px; }
.logb { width: 95px; margin-bottom: 3px; letter-spacing: -.200px; }
```
